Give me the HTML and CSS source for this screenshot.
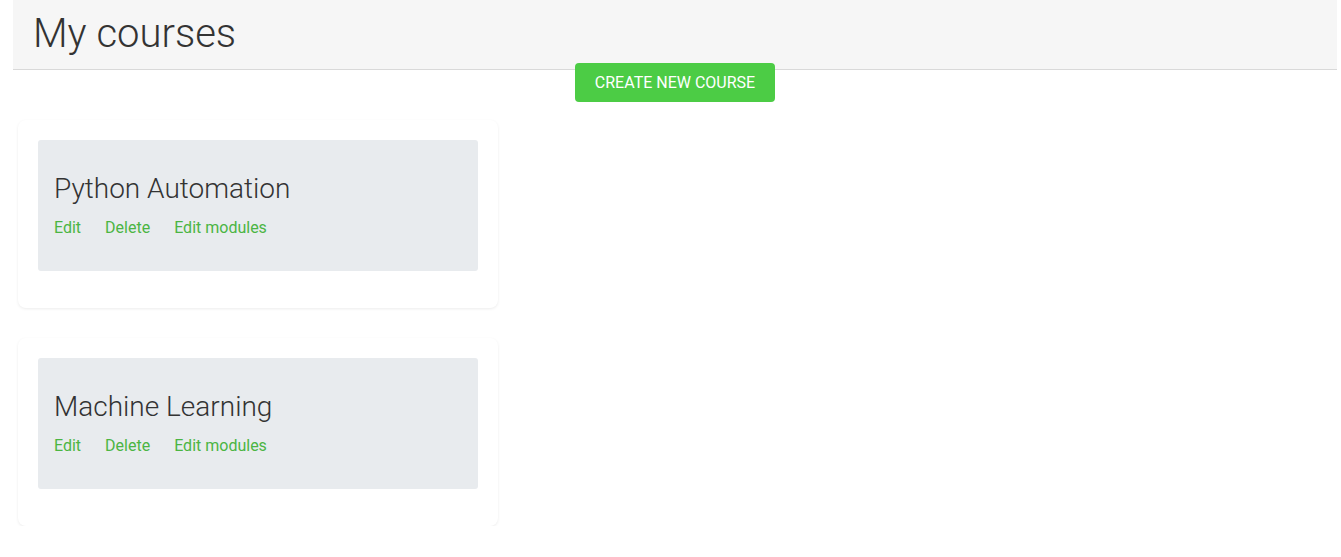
FILE: index.html
```html
<!DOCTYPE html>
<html lang="en">
<head>
    <meta charset="UTF-8">
    <meta name="viewport" content="width=device-width, initial-scale=1.0">
    <title>My courses</title>
    <link rel="stylesheet" href="styles.css">
</head>
<body>
    <div class="page">
        <div class="page-header">
            <h1>My courses</h1>
        </div>
        <div class="actions">
            <a href="#" class="btn-create">Create new course</a>
        </div>
        <div class="course-list">
            <div class="course-card">
                <div class="course-body">
                    <h2>Python Automation</h2>
                    <div class="course-links">
                        <a href="#">Edit</a>
                        <a href="#">Delete</a>
                        <a href="#">Edit modules</a>
                    </div>
                </div>
            </div>
            <div class="course-card">
                <div class="course-body">
                    <h2>Machine Learning</h2>
                    <div class="course-links">
                        <a href="#">Edit</a>
                        <a href="#">Delete</a>
                        <a href="#">Edit modules</a>
                    </div>
                </div>
            </div>
        </div>
    </div>
</body>
</html>
```

FILE: styles.css
```css
body {
    margin: 0;
    font-family: Roboto, "Liberation Sans", sans-serif;
    color: #333;
    background: #fff;
}
.page {
    margin: 0 4px 0 13px;
}
.page-header {
    background: #f6f6f6;
    border-bottom: 1px solid #d9d9d9;
    padding: 10px 20px 11px;
}
.page-header h1 {
    margin: 0;
    font-size: 40px;
    font-weight: 300;
    line-height: 48px;
}
.actions {
    display: flex;
    justify-content: center;
    margin-top: -7px;
}
.btn-create {
    display: block;
    width: 200px;
    height: 39px;
    line-height: 39px;
    text-align: center;
    background: #4ccc45;
    color: #fff;
    font-size: 16px;
    text-transform: uppercase;
    text-decoration: none;
    border-radius: 4px;
}
.course-list {
    display: flex;
    flex-direction: column;
    gap: 30px;
    margin: 18px 0 0 5px;
}
.course-card {
    width: 440px;
    padding: 20px 20px 37px;
    background: #fff;
    border-radius: 8px;
    box-shadow: 0 1px 3px rgba(0,0,0,0.08);
}
.course-body {
    background: #e8ebee;
    border-radius: 3px;
    padding: 32px 16px 34px;
}
.course-body h2 {
    margin: 0 0 12px;
    font-size: 28px;
    font-weight: 300;
    line-height: 34px;
}
.course-links {
    display: flex;
    gap: 24px;
    font-size: 16px;
    line-height: 19px;
}
.course-links a {
    color: #4bb543;
    text-decoration: none;
}
```
